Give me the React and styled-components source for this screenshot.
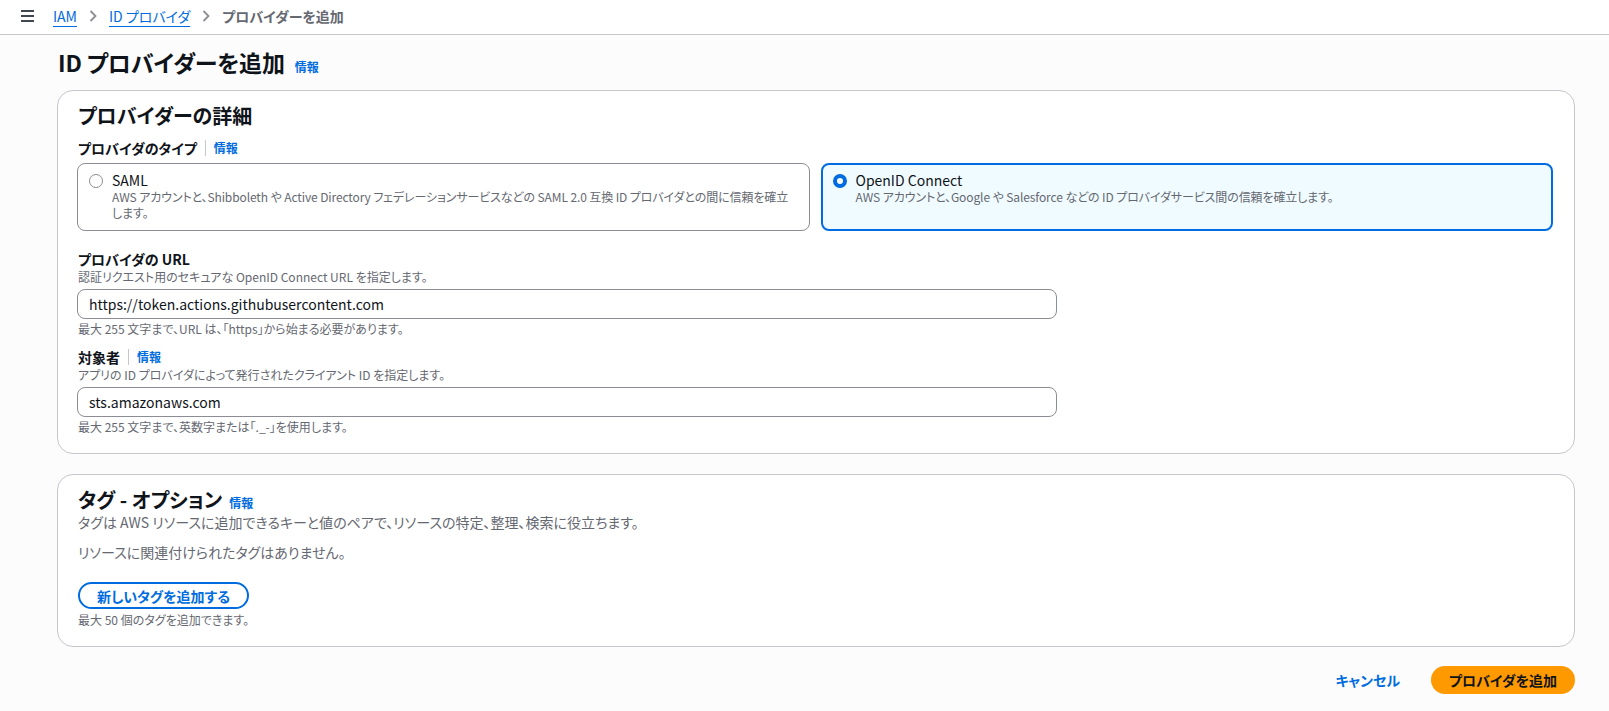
import React from "react";
import styled, { createGlobalStyle } from "styled-components";

const FONT = `"Noto Sans CJK JP", "Noto Sans", sans-serif`;
const BLUE = "#006ce0";
const TEXT = "#0f141a";
const MUTED = "#656871";

const Global = createGlobalStyle`
  html, body { margin: 0; padding: 0; }
  body {
    background: #fcfcfc;
    font-family: ${FONT};
    color: ${TEXT};
    font-feature-settings: "palt";
    -webkit-font-smoothing: antialiased;
  }
  * { box-sizing: border-box; }
`;

const TopBar = styled.header`
  height: 35px;
  background: #ffffff;
  border-bottom: 1px solid #c6c6cd;
  display: flex;
  align-items: center;
  padding: 0 0 2px 21px;
`;

const MenuButton = styled.button`
  border: 0;
  background: none;
  padding: 0;
  width: 13px;
  height: 12px;
  display: flex;
  color: #424650;
`;

const Crumbs = styled.nav`
  display: flex;
  align-items: center;
  gap: 12px;
  margin-left: 19px;
  font-size: 14px;
  line-height: 20px;
`;

const CrumbLink = styled.a`
  color: ${BLUE};
  text-decoration: underline;
  text-underline-offset: 4px;
  text-decoration-thickness: 1px;
`;

const CrumbCurrent = styled.span`
  color: #656871;
  font-weight: 700;
`;

const Chevron = styled.svg`
  width: 8px;
  height: 12px;
  color: #8c8c94;
`;

const Main = styled.main`
  padding: 11px 34px 16px 57px;
`;

const TitleRow = styled.div`
  display: flex;
  align-items: baseline;
  gap: 10px;
  margin-left: 1px;
`;

const Title = styled.h1`
  margin: 0;
  font-size: 23px;
  letter-spacing: -0.2px;
  line-height: 32px;
  font-weight: 700;
`;

const Info = styled.a`
  color: ${BLUE};
  font-size: 12px;
  font-weight: 700;
  line-height: 16px;
  cursor: pointer;
`;

const Card = styled.section`
  background: #ffffff;
  border: 1px solid #c6c6cd;
  border-radius: 16px;
  padding: ${(p) => p.$pad};
  margin-top: ${(p) => p.$top}px;
`;

const CardHeading = styled.h2`
  margin: 0;
  font-size: 20px;
  line-height: 24px;
  font-weight: 700;
  display: flex;
  align-items: baseline;
  gap: 7px;
`;

const Label = styled.div`
  font-size: 14px;
  font-weight: 700;
  line-height: 20px;
  display: flex;
  align-items: center;
  margin-top: ${(p) => p.$top || 0}px;
`;

const Divider = styled.span`
  width: 1px;
  height: 16px;
  background: #c6c6cd;
  margin: 0 8px;
`;

const TileGrid = styled.div`
  display: grid;
  grid-template-columns: 1fr 1fr;
  gap: 11px;
  margin-top: 5px;
  margin-left: -1px;
  margin-right: 1px;
`;

const Tile = styled.label`
  display: flex;
  align-items: flex-start;
  gap: 9px;
  min-height: 68px;
  border-radius: 8px;
  border: ${(p) => (p.$on ? `2px solid ${BLUE}` : "1px solid #8c8c94")};
  background: ${(p) => (p.$on ? "#f0fbff" : "#ffffff")};
  padding: ${(p) => (p.$on ? "6px 12px 7px 10px" : "7px 12px 8px 11px")};
  cursor: pointer;
`;

const Radio = styled.span`
  flex: none;
  width: 14px;
  height: 14px;
  margin-top: 3px;
  border-radius: 50%;
  background: #ffffff;
  border: ${(p) => (p.$on ? `4px solid ${BLUE}` : "1.5px solid #8c8c94")};
`;

const TileBody = styled.div`
  display: flex;
  flex-direction: column;
`;

const TileTitle = styled.span`
  font-size: 14px;
  line-height: 18px;
`;

const Hint = styled.div`
  font-size: 12px;
  line-height: 16px;
  color: ${MUTED};
  letter-spacing: ${(p) => (p.$tight ? "-0.11px" : "0")};
  margin-top: ${(p) => p.$top || 0}px;
`;

const Input = styled.input`
  display: block;
  width: 980px;
  height: 30px;
  margin: 4px 0 0 -1px;
  border: 1px solid #8c8c94;
  border-radius: 8px;
  padding: 0 11px;
  font-family: ${FONT};
  font-feature-settings: "palt";
  font-size: 14px;
  color: ${TEXT};
  background: #ffffff;
  outline: none;
`;

const Para = styled.p`
  margin: ${(p) => p.$top || 0}px 0 0;
  font-size: 14px;
  line-height: 20px;
  color: ${MUTED};
`;

const OutlineButton = styled.button`
  margin-top: 20px;
  height: 27px;
  padding: 0 17px;
  border: 2px solid ${BLUE};
  border-radius: 20px;
  background: #ffffff;
  color: ${BLUE};
  font-family: ${FONT};
  font-feature-settings: "palt";
  font-size: 14px;
  font-weight: 700;
  display: flex;
  align-items: center;
`;

const Footer = styled.div`
  display: flex;
  justify-content: flex-end;
  align-items: center;
  gap: 31px;
  margin-top: 19px;
`;

const LinkButton = styled.button`
  border: 0;
  background: none;
  padding: 0;
  color: ${BLUE};
  font-family: ${FONT};
  font-feature-settings: "palt";
  font-size: 14px;
  font-weight: 700;
`;

const PrimaryButton = styled.button`
  height: 28px;
  width: 144px;
  border: 0;
  border-radius: 20px;
  background: #ff9900;
  color: ${TEXT};
  font-family: ${FONT};
  font-feature-settings: "palt";
  font-size: 14px;
  font-weight: 700;
`;

const ChevronIcon = () => (
  <Chevron viewBox="0 0 8 12" fill="none">
    <path d="M1.5 1l5 5-5 5" stroke="currentColor" strokeWidth="1.8" />
  </Chevron>
);

export default function App() {
  return (
    <>
      <Global />
      <TopBar>
        <MenuButton aria-label="menu">
          <svg width="13" height="12" viewBox="0 0 13 12">
            <rect x="0" y="0" width="13" height="2" fill="currentColor" />
            <rect x="0" y="5" width="13" height="2" fill="currentColor" />
            <rect x="0" y="10" width="13" height="2" fill="currentColor" />
          </svg>
        </MenuButton>
        <Crumbs>
          <CrumbLink>IAM</CrumbLink>
          <ChevronIcon />
          <CrumbLink>ID プロバイダ</CrumbLink>
          <ChevronIcon />
          <CrumbCurrent>プロバイダーを追加</CrumbCurrent>
        </Crumbs>
      </TopBar>
      <Main>
        <TitleRow>
          <Title>ID プロバイダーを追加</Title>
          <Info>情報</Info>
        </TitleRow>

        <Card $top={12} $pad="13px 20px 18px 20px">
          <CardHeading>プロバイダーの詳細</CardHeading>
          <Label $top={10}>
            プロバイダのタイプ
            <Divider />
            <Info>情報</Info>
          </Label>
          <TileGrid>
            <Tile>
              <Radio />
              <TileBody>
                <TileTitle>SAML</TileTitle>
                <Hint $tight>
                  AWS アカウントと、Shibboleth や Active Directory フェデレーションサービスなどの SAML 2.0 互換 ID プロバイダとの間に信頼を確立します。
                </Hint>
              </TileBody>
            </Tile>
            <Tile $on>
              <Radio $on />
              <TileBody>
                <TileTitle>OpenID Connect</TileTitle>
                <Hint $tight>
                  AWS アカウントと、Google や Salesforce などの ID プロバイダサービス間の信頼を確立します。
                </Hint>
              </TileBody>
            </Tile>
          </TileGrid>

          <Label $top={18}>プロバイダの URL</Label>
          <Hint>認証リクエスト用のセキュアな OpenID Connect URL を指定します。</Hint>
          <Input defaultValue="https://token.actions.githubusercontent.com" />
          <Hint $top={2}>最大 255 文字まで、URL は、「https」から始まる必要があります。</Hint>

          <Label $top={10}>
            対象者
            <Divider />
            <Info>情報</Info>
          </Label>
          <Hint>アプリの ID プロバイダによって発行されたクライアント ID を指定します。</Hint>
          <Input defaultValue="sts.amazonaws.com" />
          <Hint $top={2}>最大 255 文字まで、英数字または「._-」を使用します。</Hint>
        </Card>

        <Card $top={20} $pad="13px 20px 18px 20px">
          <CardHeading>
            タグ - オプション
            <Info>情報</Info>
          </CardHeading>
          <Para>タグは AWS リソースに追加できるキーと値のペアで、リソースの特定、整理、検索に役立ちます。</Para>
          <Para $top={10}>リソースに関連付けられたタグはありません。</Para>
          <OutlineButton>新しいタグを追加する</OutlineButton>
          <Hint $top={3}>最大 50 個のタグを追加できます。</Hint>
        </Card>

        <Footer>
          <LinkButton>キャンセル</LinkButton>
          <PrimaryButton>プロバイダを追加</PrimaryButton>
        </Footer>
      </Main>
    </>
  );
}
